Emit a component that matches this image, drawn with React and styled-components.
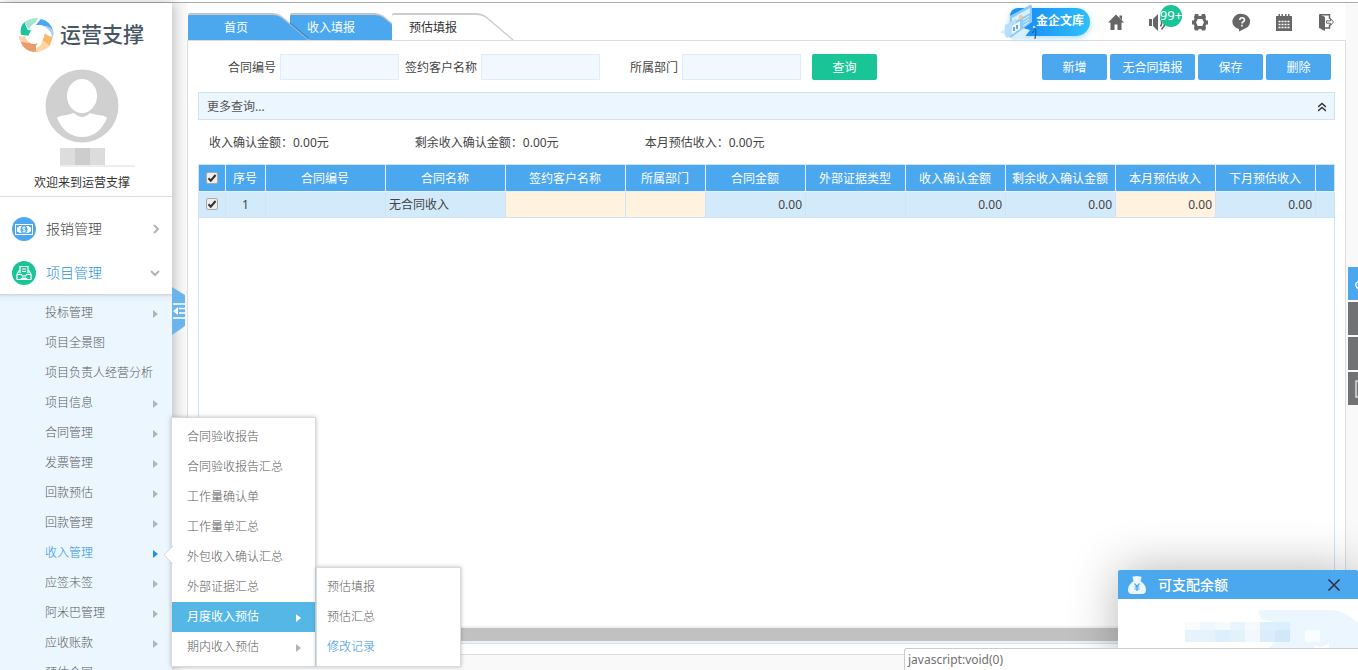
import React from 'react';
import styled, { createGlobalStyle } from 'styled-components';

const colors = {
  blue: '#4ba7ee',
  link: '#2a90dd',
  pale: '#ebf6ff',
  line: '#cfe3f5',
  row: '#d3eafa',
  editable: '#fff2df',
  green: '#19c597',
  text: '#444',
  menu: '#5a5a5a',
  icon: '#666'
};

const GlobalStyle = createGlobalStyle`
  * {
    box-sizing: border-box;
  }

  body {
    margin: 0;
    overflow: hidden;
    font-family: 'Noto Sans', 'Noto Sans CJK SC', sans-serif;
    font-size: 12px;
    line-height: 18px;
    color: ${colors.text};
  }

  button,
  input {
    font: inherit;
  }

  a {
    color: inherit;
    text-decoration: none;
  }
`;

const Page = styled.div`
  height: 100vh;
  display: flex;
  flex-direction: column;
  overflow: hidden;
  background: #f9f9f9;
`;

const TopLine = styled.div`
  flex: none;
  height: 3px;
  background: #fff;
  border-bottom: 1px solid #adadad;
`;

const Body = styled.div`
  position: relative;
  flex: 1;
  min-height: 0;
  display: flex;
`;

/* sidebar */

const Sidebar = styled.aside`
  position: relative;
  z-index: 5;
  flex: none;
  width: 172px;
  display: flex;
  flex-direction: column;
  background: #fff;
  box-shadow: 2px 0 12px rgba(0, 0, 0, 0.25);
`;

const Profile = styled.div`
  flex: none;
  height: 194px;
  border-bottom: 1px solid #ddd;
`;

const Brand = styled.a`
  display: flex;
  align-items: center;
  gap: 5px;
  padding: 14px 0 0 18px;
  font-size: 21px;
  line-height: 34px;
  font-weight: 500;
  color: #475562;

  span {
    padding-bottom: 2px;
  }
`;

const User = styled.div`
  width: 164px;
  display: flex;
  flex-direction: column;
  align-items: center;
  padding-top: 16px;
  color: #333;
`;

const MaskedName = styled.div`
  width: 45px;
  height: 18px;
  margin-top: 5px;
  background: linear-gradient(90deg, #ddd 15px, #cdcdcd 15px, #cdcdcd 30px, #dcdcdc 30px);
`;

const NameLine = styled.div`
  width: 74px;
  height: 2px;
  margin-left: 32px;
  margin-top: -1px;
  margin-bottom: 7px;
  background: #eee;
`;

const MainMenu = styled.nav`
  flex: none;
  padding-top: 9px;
`;

const MainMenuItem = styled.a`
  display: flex;
  align-items: center;
  height: 44px;
  padding: 1px 12px 0;
  gap: 10px;
  font-size: 14px;
  font-weight: 300;
  color: ${(props) => props.$active ? colors.link : '#444'};

  span {
    flex: 1;
  }
`;

const SubMenu = styled.nav`
  flex: 1;
  min-height: 0;
  overflow: hidden;
  padding-top: 4px;
  background: linear-gradient(#cbd6df, #e4eff8 3px, ${colors.pale} 8px);
`;

const MenuItem = styled.a`
  display: flex;
  align-items: center;
  justify-content: space-between;
  height: 30px;
  padding: 0 14px 0 ${(props) => props.$indent}px;
  font-weight: 300;
  color: ${(props) => props.$active ? colors.link : colors.menu};
  background: ${(props) => props.$selected ? '#54b7e6' : 'transparent'};

  ${(props) => props.$selected && 'color: #fff; font-weight: 400;'}
`;

const Arrow = styled.i`
  width: 0;
  height: 0;
  margin-top: 2px;
  border: 4px solid transparent;
  border-right-width: 0;
  border-left: 5px solid ${(props) => props.$color || '#b4b4b4'};
`;

const CollapseButton = styled.button`
  position: absolute;
  left: 172px;
  top: 284px;
  z-index: 6;
  width: 13px;
  height: 48px;
  padding: 0;
  border: 0;
  background: #6bb4ec;
  clip-path: polygon(0 0, 100% 8px, 100% 39px, 0 100%);

  svg {
    display: block;
  }
`;

/* floating menus */

const Flyout = styled.nav`
  position: absolute;
  left: ${(props) => props.$left}px;
  top: ${(props) => props.$top}px;
  z-index: 10;
  width: 145px;
  padding: 4px 0;
  background: #fff;
  border: 1px solid #d4dce2;
  box-shadow: 0 0 4px rgba(0, 0, 0, 0.25);
`;

const Pointer = styled.svg`
  position: absolute;
  left: -9px;
  top: 128px;
`;

/* main area */

const Main = styled.main`
  flex: 1;
  min-width: 0;
  display: flex;
  flex-direction: column;
  margin: 0 12px 15px 15px;
`;

const Header = styled.header`
  flex: none;
  height: 37px;
  display: flex;
  justify-content: space-between;
  align-items: flex-end;
  background: #fff;
`;

const Tabs = styled.div`
  display: flex;
  padding-left: 1px;
`;

const Tab = styled.button`
  position: relative;
  z-index: ${(props) => props.$level};
  width: 124px;
  height: 28px;
  margin-right: -22px;
  padding: 3px ${(props) => props.$home ? 28 : 42}px 0 0;
  border: 0;
  background: none;
  color: ${(props) => props.$active ? '#333' : '#fff'};

  svg {
    position: absolute;
    left: 0;
    top: 0;
    z-index: -1;
  }
`;

const Tools = styled.div`
  display: flex;
  align-items: center;
  height: 37px;
  padding-right: 7px;
`;

const ToolButton = styled.button`
  position: relative;
  width: 26px;
  height: 26px;
  margin-left: 16px;
  padding: 3px;
  border: 0;
  background: none;
  color: ${colors.icon};

  svg {
    display: block;
  }
`;

const Badge = styled.span`
  position: absolute;
  left: 15px;
  top: -4px;
  width: 22px;
  height: 22px;
  display: flex;
  justify-content: center;
  border-radius: 11px;
  background: ${colors.green};
  color: #fff;
  font-size: 13px;
  line-height: 20px;
`;

const Library = styled.a`
  position: relative;
  width: 80px;
  height: 28px;
  margin-right: -3px;
  padding-left: 26px;
  border-radius: 8px 14px 14px 8px;
  background: linear-gradient(100deg, #1b94f7 30%, #2fc2fb);
  box-shadow: 0 2px 6px #a9dcfb;
  color: #fff;
  font-weight: 700;
  line-height: 26px;

  svg {
    position: absolute;
    left: -10px;
    top: -5px;
  }
`;

const Panel = styled.section`
  flex: 1;
  min-height: 0;
  display: flex;
  flex-direction: column;
  padding: 13px 10px 10px;
  background: #fff;
  border: 1px solid #ddd;
`;

const Toolbar = styled.form`
  display: flex;
  align-items: center;
  padding-right: 4px;
`;

const Field = styled.div`
  display: flex;
  align-items: center;
  gap: ${(props) => props.$gap}px;

  label {
    width: 78px;
    padding-top: 2px;
    text-align: right;
  }

  input {
    width: 119px;
    height: 26px;
    padding: 0 6px;
    border: 1px solid #dceefc;
    background: #f1f8ff;
    outline: 0;
  }
`;

const Button = styled.button`
  width: ${(props) => props.$wide ? 85 : 65}px;
  height: 26px;
  padding: 2px 0 0;
  border: 0;
  border-radius: 2px;
  background: ${(props) => props.$green ? colors.green : colors.blue};
  color: #fff;
`;

const SearchButton = styled(Button)`
  margin-left: 11px;
`;

const Actions = styled.div`
  display: flex;
  gap: 3px;
  margin-left: auto;
`;

const MoreQuery = styled.button`
  flex: none;
  display: flex;
  align-items: center;
  justify-content: space-between;
  height: 28px;
  margin-top: 12px;
  padding: 2px 8px 0;
  border: 1px solid ${colors.line};
  background: ${colors.pale};
  color: #555;
`;

const Summary = styled.div`
  flex: none;
  display: flex;
  gap: 86px;
  padding: 14px 11px 12px;
`;

const Grid = styled.div`
  flex: 1;
  min-height: 0;
  display: flex;
  flex-direction: column;
  justify-content: space-between;
  border: 1px solid ${colors.line};
`;

const Table = styled.table`
  width: 100%;
  table-layout: fixed;
  border-collapse: separate;
  border-spacing: 0;

  th,
  td {
    padding: 0 3px;
    white-space: nowrap;
    border-right: 1px solid ${colors.line};
    border-bottom: 1px solid ${colors.line};
  }

  th {
    height: 27px;
    padding: 2px 3px 0 2px;
    background: ${colors.blue};
    border-color: #e6f3fd;
    color: #fff;
    font-weight: 400;
  }

  th:last-child,
  td:last-child {
    border-right: 0;
  }
`;

const Cell = styled.td`
  height: 26px;
  text-align: ${(props) => props.$align || 'left'};
  background: ${(props) => props.$editable ? colors.editable : colors.row};
`;

const Checkbox = styled.input`
  appearance: none;
  display: block;
  width: 12px;
  height: 12px;
  margin: 0 auto 2px;
  border: 1px solid #aaa;
  border-radius: 2px;
  background: #eee;

  &:checked {
    background: #eee url("data:image/svg+xml,%3Csvg xmlns='http://www.w3.org/2000/svg' viewBox='0 0 10 10'%3E%3Cpath d='M1.5 5.2l2.3 2.5L8.6 2' fill='none' stroke='%23333' stroke-width='2'/%3E%3C/svg%3E");
  }
`;

const ScrollTrack = styled.div`
  flex: none;
  height: 17px;
  padding: 2px 0;
  background: #f1f1f1;
`;

const ScrollThumb = styled.div`
  width: 97%;
  height: 13px;
  background: #c1c1c1;
`;

/* things pinned to the window */

const SideButtons = styled.div`
  position: fixed;
  right: 0;
  top: 267px;
  z-index: 4;
  width: 10px;
  display: flex;
  flex-direction: column;
  gap: 2px;
`;

const SideButton = styled.button`
  height: 33px;
  padding: 0 0 0 7px;
  border: 0;
  overflow: hidden;
  background: ${(props) => props.$primary ? colors.blue : '#717274'};

  svg {
    display: block;
  }
`;

const Balance = styled.section`
  position: fixed;
  right: 0;
  bottom: 0;
  z-index: 7;
  width: 240px;
  height: 100px;
  background: #fff;
  border-radius: 2px 2px 0 0;
  box-shadow: 1px 1px 50px rgba(0, 0, 0, 0.3);
`;

const BalanceHead = styled.div`
  display: flex;
  align-items: center;
  gap: 12px;
  height: 29px;
  padding: 0 17px 0 10px;
  border-radius: 2px 2px 0 0;
  background: ${colors.blue};

  h2 {
    flex: 1;
    margin: 0;
    font-size: 14px;
    font-weight: 500;
    color: #fff;
  }

  button {
    padding: 0;
    border: 0;
    background: none;
  }

  svg {
    display: block;
  }
`;

const BalanceBody = styled.div`
  display: flex;
  justify-content: flex-end;
  padding-top: 11px;
`;

const StatusBar = styled.div`
  position: fixed;
  right: 0;
  bottom: 0;
  z-index: 8;
  width: 454px;
  height: 22px;
  padding: 2px 3px 0;
  border: 1px solid #ccc;
  border-width: 1px 0 0 1px;
  border-radius: 3px 0 0 0;
  background: #fff;
  color: #707070;
`;

const subMenu = [
  { name: '投标管理', more: true },
  { name: '项目全景图' },
  { name: '项目负责人经营分析' },
  { name: '项目信息', more: true },
  { name: '合同管理', more: true },
  { name: '发票管理', more: true },
  { name: '回款预估', more: true },
  { name: '回款管理', more: true },
  { name: '收入管理', more: true, active: true },
  { name: '应签未签', more: true },
  { name: '阿米巴管理', more: true },
  { name: '应收账款', more: true },
  { name: '预估合同', more: true }
];

const incomeMenu = [
  { name: '合同验收报告' },
  { name: '合同验收报告汇总' },
  { name: '工作量确认单' },
  { name: '工作量单汇总' },
  { name: '外包收入确认汇总' },
  { name: '外部证据汇总' },
  { name: '月度收入预估', more: true, selected: true },
  { name: '期内收入预估', more: true }
];

const monthMenu = [
  { name: '预估填报' },
  { name: '预估汇总' },
  { name: '修改记录', active: true }
];

const columns = [
  { title: '序号', width: 40, value: '1', align: 'center' },
  { title: '合同编号', width: 120 },
  { title: '合同名称', width: 120, value: '无合同收入' },
  { title: '签约客户名称', width: 120, editable: true },
  { title: '所属部门', width: 80, editable: true },
  { title: '合同金额', width: 100, value: '0.00', align: 'right' },
  { title: '外部证据类型', width: 100 },
  { title: '收入确认金额', width: 100, value: '0.00', align: 'right' },
  { title: '剩余收入确认金额', width: 110, value: '0.00', align: 'right' },
  { title: '本月预估收入', width: 100, value: '0.00', align: 'right', editable: true },
  { title: '下月预估收入', width: 100, value: '0.00', align: 'right' },
  { title: '' }
];

function Logo() {
  return (
    <svg width="37" height="36" viewBox="55 52 110 108">
      <path d="M74 67Q92 55 114 54L107 69Q93 74 88 91Z" fill="#a3e5d1" />
      <path d="M74 67Q78 80 84 91L94 92L85 108L63 105Q59 82 74 67Z" fill="#1bc49a" />
      <path d="M108 76L123 58Q154 64 161 98L156 92Q146 80 134 80L124 76Z" fill="#4ba7ee" />
      <path d="M132 80Q154 78 161 98Q163 108 158 116Q154 90 132 80Z" fill="#a5d3f7" />
      <path d="M135 101L146 108L158 112Q154 128 149 140Q136 130 128 122Q134 112 135 101Z" fill="#fbb869" />
      <path d="M128 121L149 139Q136 154 106 158L115 142Q126 137 128 121Z" fill="#fdd6a3" />
      <path d="M57 108Q66 113 76 109Q77 121 92 130L64 128Q57 118 57 108Z" fill="#f9d0aa" />
      <path d="M62 126L90 130Q101 136 114 131L108 139L110 157L103 154L105 158Q73 155 62 126Z" fill="#eb9b6b" />
    </svg>
  );
}

function Avatar() {
  return (
    <svg width="74" height="74" viewBox="0 0 74 74">
      <circle cx="37" cy="37" r="36.500" fill="#d0d0d0" />
      <ellipse cx="37" cy="27" rx="15" ry="17" fill="#fff" />
      <path d="M12 49Q13 47 19 46.500L26 45Q28 44 29 44Q37 52 45 44L48 45L56 46.500Q61 47 62 49Q54 68 37 68Q20 68 12 49Z" fill="#fff" />
    </svg>
  );
}

function TabShape({ active }) {
  return (
    <svg width="124" height="28" viewBox="0 0 124 28" aria-hidden="true">
      <path d="M0 28V3Q0 1 2 1H84Q90 1 95 5L122 28Z" fill={ active ? '#ccc' : '#c2c8cd' } />
      {!active && <path d="M102 11L121 27" stroke="#3a89c9" strokeWidth="1.500" />}
      <path d="M0 28V4Q0 3 2 3H84Q90 3 94 6L120 28Z" fill={ active ? '#fff' : colors.blue } />
    </svg>
  );
}

function Menu({ items, indent }) {
  return items.map((item) => (
    <MenuItem key={ item.name } href="#" $indent={ indent } $active={ item.active } $selected={ item.selected }>
      {item.name}
      {item.more && <Arrow $color={ item.selected ? '#fff' : item.active && colors.link } />}
    </MenuItem>
  ));
}

function SideMenu() {
  return (
    <Sidebar>
      <Profile>
        <Brand href="#"><Logo /><span>运营支撑</span></Brand>
        <User>
          <Avatar />
          <MaskedName />
          <NameLine />
          欢迎来到运营支撑
        </User>
      </Profile>
      <MainMenu>
        <MainMenuItem href="#">
          <svg width="24" height="24" viewBox="0 0 24 24">
            <circle cx="12" cy="12" r="12" fill={ colors.blue } />
            <rect x="3.500" y="7.500" width="17" height="10" fill="none" stroke="#fff" />
            <path d="M7 9h10q0 1.500 2 1.500v4q-2 0-2 1.500H7q0-1.500-2-1.500v-4q2 0 2-1.500z" fill="#fff" />
            <ellipse cx="12" cy="12.500" rx="3.500" ry="3.800" fill={ colors.blue } />
            <path d="M13.500 10.800q-.5-.6-1.500-.6-1.500 0-1.500 1.100 0 .9 1.500 1.200t1.500 1.200q0 1.100-1.500 1.100-1.100 0-1.700-.7M12 9.300v6.400" fill="none" stroke="#fff" strokeWidth=".9" />
          </svg>
          <span>报销管理</span>
          <svg width="8" height="10" viewBox="0 0 8 10"><path d="M2 1l4 4-4 4" fill="none" stroke="#b4b4b4" strokeWidth="2" /></svg>
        </MainMenuItem>
        <MainMenuItem href="#" $active>
          <svg width="24" height="24" viewBox="0 0 24 24">
            <circle cx="12" cy="12" r="12" fill={ colors.green } />
            <path d="M8 12.500V5.500h8V12.500M10 8h4M10 10.300h4" fill="none" stroke="#fff" strokeWidth="1.200" />
            <path d="M7.500 9L5 13.500V18.500h14V13.500L16.500 9M5 13.500h4.500l1 1.500h3l1-1.500H19" fill="none" stroke="#fff" strokeWidth="1.200" />
            <path d="M7.500 18.500l2.500-2h4l2.500 2z" fill="#fff" />
          </svg>
          <span>项目管理</span>
          <svg width="10" height="8" viewBox="0 0 10 8"><path d="M1 2l4 4 4-4" fill="none" stroke="#b4b4b4" strokeWidth="2" /></svg>
        </MainMenuItem>
      </MainMenu>
      <SubMenu>
        <Menu items={ subMenu } indent={ 45 } />
      </SubMenu>
    </Sidebar>
  );
}

function HeaderTools() {
  return (
    <Tools>
      <Library href="#">
        <svg width="40" height="38" viewBox="0 0 40 38">
          <path d="M0 29L12 22L30 27L24 35L14 37Z" fill="#d8effd" />
          <path d="M10 13L30 2Q32 1 32 5V19L12 34Q8 36 9 30Z" fill="#8ecbf8" />
          <path d="M12 15L30 5V10L12 20Z" fill="#d9effe" />
          <path d="M5 22L16 16V29L7 35Q4 34 5 22Z" fill="#b9defa" />
          <path d="M12 23L20 18V26L12 31Z" fill="#eef8ff" />
          <path d="M14 28v-4M17 26v-4" stroke="#3b8be0" strokeWidth="1.500" />
          <path d="M23 17l6-4M23 20l6-4M23 23l6-4" stroke="#e4f4ff" />
          <circle cx="21" cy="14" r="2" fill="#ffc08a" />
          <path d="M34 25l2 3-1 8M34 28l-2 2" fill="none" stroke="#215a9c" strokeWidth="1.200" />
          <circle cx="34" cy="24" r="1.300" fill="#f2c7a8" />
        </svg>
        金企文库
      </Library>
      <ToolButton aria-label="首页">
        <svg width="20" height="20" viewBox="0 0 20 20" fill="currentColor">
          <path d="M10 2.500L18 10.500H15.500V18H11.500V12.500H8.500V18H4.500V10.500H2ZM13.500 3.500h2.500v4.500l-2.500-2.500z" />
        </svg>
      </ToolButton>
      <ToolButton aria-label="消息">
        <svg width="20" height="20" viewBox="0 0 20 20" fill="currentColor">
          <path d="M1 7h3v7H1zM5 7l5-5v17L5 14z" />
          <path d="M12.500 6.500q2.500 4 0 8M14.500 4q5.500 7-1 13.500" fill="none" stroke="currentColor" strokeWidth="1.600" />
        </svg>
        <Badge>99+</Badge>
      </ToolButton>
      <ToolButton aria-label="设置">
        <svg width="20" height="20" viewBox="0 0 20 20" fill="currentColor" fillRule="evenodd">
          <path d="M5 2H8L8.800 4H11.200L12 2H15L16 5L15.500 7L16.300 8.500H18V12.500H16.300L15.500 14L16 16L15 18.500H12L11.200 17H8.800L8 18.500H5L4 16L4.500 14L3.700 12.500H2V8.500H3.700L4.500 7L4 5ZM7.800 7L6 10.500L7.800 14H12.200L14 10.500L12.200 7Z" />
        </svg>
      </ToolButton>
      <ToolButton aria-label="帮助">
        <svg width="20" height="20" viewBox="0 0 20 20">
          <path d="M10 2a8 7.500 0 0 1 3 14.500L7 19.500V17A8 7.500 0 0 1 10 2z" fill="currentColor" />
          <path d="M7.800 8q0-2.200 2.300-2.200T12.400 8q0 1.200-1.200 1.800T10 11.500M10 12.800v1.700" fill="none" stroke="#fff" strokeWidth="1.600" />
        </svg>
      </ToolButton>
      <ToolButton aria-label="日历">
        <svg width="20" height="20" viewBox="0 0 20 20">
          <path d="M2 4h16v15H2zM4.500 2H6v3H4.500zM7.500 2H9v3H7.500zM11 2h1.500v3H11zM14 2h1.500v3H14z" fill="currentColor" />
          <path d="M4.500 9.500h11M4.500 12.500h11M4.500 15.500h11" stroke="#fff" strokeWidth="1.600" strokeDasharray="2 1" />
        </svg>
      </ToolButton>
      <ToolButton aria-label="退出">
        <svg width="20" height="20" viewBox="0 0 20 20">
          <path d="M3 2l6 3v14L3 16z" fill="currentColor" />
          <path d="M4 2.700h9.500V7M9 16h4.500V12.500" fill="none" stroke="currentColor" strokeWidth="1.400" />
          <path d="M10.500 8.800h4V6.500L17.500 10l-3 3.500v-2.300h-4z" fill="#fff" stroke="currentColor" />
        </svg>
      </ToolButton>
    </Tools>
  );
}

function IncomeTable() {
  return (
    <Grid>
      <Table>
        <colgroup>
          <col width="27" />
          {columns.map((column) => <col key={ column.title } width={ column.width } />)}
        </colgroup>
        <thead>
          <tr>
            <th><Checkbox type="checkbox" defaultChecked aria-label="全选" /></th>
            {columns.map((column) => <th key={ column.title }>{column.title}</th>)}
          </tr>
        </thead>
        <tbody>
          <tr>
            <Cell><Checkbox type="checkbox" defaultChecked aria-label="选择第1行" /></Cell>
            {columns.map((column) => (
              <Cell key={ column.title } $align={ column.align } $editable={ column.editable }>
                {column.value}
              </Cell>
            ))}
          </tr>
        </tbody>
      </Table>
      <ScrollTrack><ScrollThumb /></ScrollTrack>
    </Grid>
  );
}

function BalancePopup() {
  return (
    <Balance>
      <BalanceHead>
        <svg width="18" height="18" viewBox="0 0 18 18">
          <path d="M4.500 1.500Q4 0 6 .5l3-.5 3 .5q2-.5 1.500 1L12.500 5Q18 9 18 13.500 18 18 14 18H4q-4 0-4-4.500Q0 9 5.500 5z" fill="#ecf7ff" />
          <path d="M6.500 7.500L9 10.500l2.500-3M9 10.500V15M6.500 11h5M6.500 13h5" fill="none" stroke={ colors.blue } strokeWidth="1.200" />
        </svg>
        <h2>可支配余额</h2>
        <button aria-label="关闭">
          <svg width="14" height="14" viewBox="0 0 14 14"><path d="M1.500 1.500l11 11M12.500 1.500l-11 11" stroke="#2e2d3c" strokeWidth="1.500" /></svg>
        </button>
      </BalanceHead>
      <BalanceBody>
        <svg width="183" height="40" viewBox="0 0 183 40">
          <path d="M83 0H158Q172 2 183 13V40H88Q100 38 98 27L97 11Q84 11 83 0Z" fill="#ebf6ff" />
          <path d="M140 35q6 4 10 0l4-2v4l-4 3h-12z" fill="#fff" />
          <g shapeRendering="crispEdges">
            <path d="M10 12h15v8H10z" fill="#f8fcff" />
            <path d="M25 12h15v8H25z" fill="#f0f8fe" />
            <path d="M40 12h15v8H40z" fill="#f5fafe" />
            <path d="M55 12h15v8H55z" fill="#e9f4fd" />
            <path d="M70 12h15v8H70z" fill="#f5fafe" />
            <path d="M85 12h30v8H85z" fill="#dceffc" />
            <path d="M10 20h30v12H10z" fill="#e6f3fd" />
            <path d="M40 20h15v12H40z" fill="#dceffd" />
            <path d="M55 20h15v12H55z" fill="#e3f1fb" />
            <path d="M70 20h15v12H70z" fill="#f1f8fe" />
            <path d="M85 20h15v12H85z" fill="#d9edfb" />
            <path d="M100 20h15v12h-15z" fill="#d0e8f9" />
            <path d="M130 20h15v12h-15z" fill="#fafdff" />
          </g>
        </svg>
      </BalanceBody>
    </Balance>
  );
}

function App() {
  return (
    <Page>
      <GlobalStyle />
      <TopLine />
      <Body>
        <SideMenu />
        <CollapseButton aria-label="收起菜单">
          <svg width="13" height="48" viewBox="0 0 13 48">
            <path d="M1 17h12M7 21.500h6M7 26h6M1 31h12" stroke="#fff" strokeWidth="1.500" />
            <path d="M1 24l5-4v8z" fill="#fff" />
          </svg>
        </CollapseButton>
        <Flyout $left={ 171 } $top={ 414 }>
          <Pointer width="10" height="18" viewBox="0 0 10 18">
            <path d="M10 0L1 9L10 18" fill="#fff" stroke="#d4dce2" />
          </Pointer>
          <Menu items={ incomeMenu } indent={ 15 } />
        </Flyout>
        <Flyout $left={ 316 } $top={ 564 }>
          <Menu items={ monthMenu } indent={ 10 } />
        </Flyout>
        <Main>
          <Header>
            <Tabs>
              <Tab $level={ 2 } $home><TabShape />首页</Tab>
              <Tab $level={ 1 }><TabShape />收入填报</Tab>
              <Tab $level={ 3 } $active><TabShape active />预估填报</Tab>
            </Tabs>
            <HeaderTools />
          </Header>
          <Panel>
            <Toolbar onSubmit={ (e) => e.preventDefault() }>
              <Field $gap={ 4 }>
                <label htmlFor="contract">合同编号</label>
                <input id="contract" />
              </Field>
              <Field $gap={ 4 }>
                <label htmlFor="customer">签约客户名称</label>
                <input id="customer" />
              </Field>
              <Field $gap={ 4 }>
                <label htmlFor="department">所属部门</label>
                <input id="department" />
              </Field>
              <SearchButton $green>查询</SearchButton>
              <Actions>
                <Button type="button">新增</Button>
                <Button type="button" $wide>无合同填报</Button>
                <Button type="button">保存</Button>
                <Button type="button">删除</Button>
              </Actions>
            </Toolbar>
            <MoreQuery>
              更多查询...
              <svg width="8" height="10" viewBox="0 0 8 10"><path d="M0 5l4-3.500L8 5M0 9l4-3.500L8 9" fill="none" stroke="#333" strokeWidth="1.400" /></svg>
            </MoreQuery>
            <Summary>
              <span>收入确认金额：0.00元</span>
              <span>剩余收入确认金额：0.00元</span>
              <span>本月预估收入：0.00元</span>
            </Summary>
            <IncomeTable />
          </Panel>
        </Main>
      </Body>
      <SideButtons>
        <SideButton $primary aria-label="客服">
          <svg width="12" height="14" viewBox="0 0 12 14"><path d="M5 1L3 5Q0 6 1 9t5 4" fill="none" stroke="#fff" strokeWidth="1.300" /></svg>
        </SideButton>
        <SideButton aria-label="消息" />
        <SideButton aria-label="反馈" />
        <SideButton aria-label="手机版">
          <svg width="12" height="18" viewBox="0 0 12 18"><path d="M1 1h10v16H1z" fill="none" stroke="#ddd" strokeWidth="1.500" /></svg>
        </SideButton>
      </SideButtons>
      <BalancePopup />
      <StatusBar>javascript:void(0)</StatusBar>
    </Page>
  );
}

export default App;
